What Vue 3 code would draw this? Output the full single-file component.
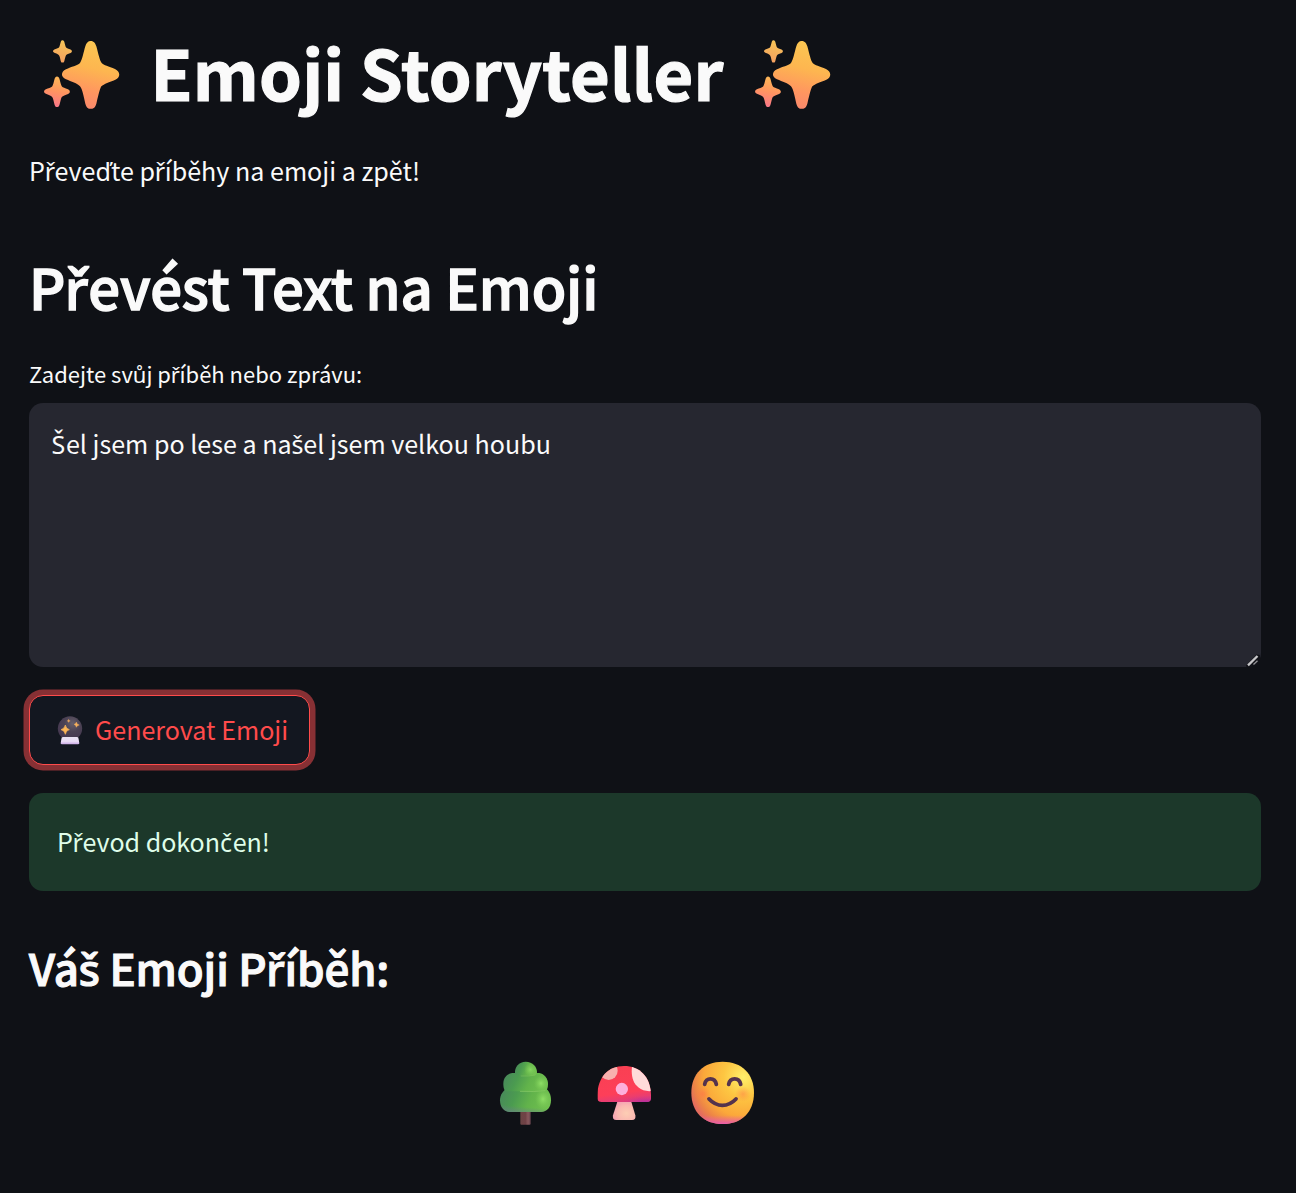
<script setup>
import { h, ref } from 'vue'

const story = ref('Šel jsem po lese a našel jsem velkou houbu')

// Letters with a caron that the main typeface lacks, and the class that sizes each.
const carons = { Š: 'cap-s', š: 'low-s', ř: 'low-r', č: 'low-c', ď: 'low-d' }
const split = (text) => text.split(/([Šščřď])/).filter(Boolean)

const Words = (props) =>
  split(props.text).map((part) => (carons[part] ? h('span', { class: ['caron', carons[part]] }, part) : part))
Words.props = ['text']
</script>

<template>
  <main class="page">
    <svg class="defs" width="0" height="0" aria-hidden="true">
      <defs>
        <linearGradient id="spark" x1="0.6" y1="0" x2="0.4" y2="1">
          <stop offset="0" stop-color="#fbc752" />
          <stop offset="0.4" stop-color="#fdb650" />
          <stop offset="0.75" stop-color="#ff9560" />
          <stop offset="1" stop-color="#f9886c" />
        </linearGradient>
        <linearGradient id="sparkLow" x1="0.6" y1="0" x2="0.4" y2="1">
          <stop offset="0" stop-color="#fdb956" />
          <stop offset="0.5" stop-color="#ff9461" />
          <stop offset="1" stop-color="#f9768a" />
        </linearGradient>
        <linearGradient id="sparkTop" x1="0.6" y1="0" x2="0.4" y2="1">
          <stop offset="0" stop-color="#f5c557" />
          <stop offset="1" stop-color="#f59f60" />
        </linearGradient>
        <path id="star" d="M182 48C192 48 196 55 199 64C206 90 209 106 215 114C221 121 236 124 255 132C272 140 272 157 256 164C238 172 222 176 214 184C208 194 203 222 199 236C195 250 188 251 182 251C176 251 170 250 166 236C161 215 157 192 150 184C142 175 124 170 108 163C92 156 92 141 108 133C124 125 142 122 150 114C157 105 161 80 166 64C169 54 174 48 182 48Z" />
      </defs>
    </svg>

    <h1 class="title">
      <svg class="sparkles left" viewBox="30 30 270 240">
        <use href="#star" fill="url(#spark)" />
        <use href="#star" fill="url(#sparkTop)" transform="translate(37.4 29.8) scale(.33)" />
        <use href="#star" fill="url(#sparkLow)" transform="translate(-1 133) scale(.45)" />
      </svg>
      <span>Emoji Storyteller</span>
      <svg class="sparkles right" viewBox="30 30 270 240">
        <use href="#star" fill="url(#spark)" />
        <use href="#star" fill="url(#sparkTop)" transform="translate(37.4 29.8) scale(.33)" />
        <use href="#star" fill="url(#sparkLow)" transform="translate(-1 133) scale(.45)" />
      </svg>
    </h1>
    <p class="intro"><Words text="Převeďte příběhy na emoji a zpět!" /></p>

    <h2 class="section"><Words text="Převést Text na Emoji" /></h2>
    <div id="story-label" class="label"><Words text="Zadejte svůj příběh nebo zprávu:" /></div>
    <div class="field">
      <div class="input" role="textbox" aria-multiline="true" aria-labelledby="story-label"><Words :text="story" /></div>
      <svg class="grip" viewBox="0 0 14 14">
        <path d="M0 12.500L10.500 1.500L14 2V7L6 14H0.500Z" fill="#111218" />
        <path d="M2 12.300L11.500 3" stroke="#c8c8ca" stroke-width="2.400" />
        <path d="M7.500 11.500L11.500 7.800" stroke="#96969a" stroke-width="1.200" />
      </svg>
    </div>

    <button class="generate" type="button">
      <svg class="ball" viewBox="123 104 84 90">
        <defs>
          <radialGradient id="orb" cx="0.6" cy="0.3" r="0.75">
            <stop offset="0" stop-color="#67606c" />
            <stop offset="0.45" stop-color="#4b4254" />
            <stop offset="1" stop-color="#443650" />
          </radialGradient>
          <linearGradient id="base" x1="0" y1="0" x2="0" y2="1">
            <stop offset="0" stop-color="#e9e3f2" />
            <stop offset="0.6" stop-color="#eadcf6" />
            <stop offset="1" stop-color="#c8a7e4" />
          </linearGradient>
        </defs>
        <circle cx="165" cy="144.500" r="36.500" fill="url(#orb)" />
        <path d="M144 170H186Q191 170 191 177L193 189Q193 192 189 192H141Q137 192 137 189L139 177Q139 170 144 170Z" fill="url(#base)" />
        <path d="M151 134Q153 145 163 148Q153 150 151 162Q149 150 138 148Q149 145 151 134Z" fill="#fdb657" stroke="#fdb657" stroke-width="2" />
        <path d="M184 125Q185 132 193 134Q186 135 184 141Q183 135 177 132Q183 131 184 125Z" fill="#f6b15d" stroke="#f6b15d" />
        <path d="M161 116Q162 120 167 122Q162 123 161 127Q160 123 155 122Q160 120 161 116Z" fill="#e9a45b" />
      </svg>
      <span>Generovat Emoji</span>
    </button>

    <div class="alert"><Words text="Převod dokončen!" /></div>

    <h3 class="result-title"><Words text="Váš Emoji Příběh:" /></h3>
    <div class="result">
      <svg width="57" height="67" viewBox="36 45 171 201">
        <defs>
          <linearGradient id="leaf" x1="0" y1="0.3" x2="1" y2="0.5">
            <stop offset="0" stop-color="#48895a" />
            <stop offset="0.3" stop-color="#4b9b50" />
            <stop offset="0.6" stop-color="#62b34b" />
            <stop offset="1" stop-color="#71c150" />
          </linearGradient>
          <radialGradient id="shine">
            <stop offset="0" stop-color="#8fdf66" />
            <stop offset="1" stop-color="#7ccb56" stop-opacity="0" />
          </radialGradient>
          <linearGradient id="trunk">
            <stop offset="0" stop-color="#6a4444" />
            <stop offset="0.5" stop-color="#704146" />
            <stop offset="0.75" stop-color="#87585c" />
            <stop offset="1" stop-color="#68434d" />
          </linearGradient>
          <linearGradient id="shade" x1="0.2" y1="0" x2="0" y2="1">
            <stop offset="0.7" stop-color="#687f84" stop-opacity="0" />
            <stop offset="1" stop-color="#687f84" stop-opacity="0.8" />
          </linearGradient>
        </defs>
        <path d="M106 190H137V236Q137 239 134 239H109Q106 239 106 236Z" fill="url(#trunk)" />
        <path d="M68 129H180C192 136 198 149 198 166C198 187 186 201 168 201H76C57 201 45 187 45 166C45 149 55 136 68 129Z" fill="url(#leaf)" />
        <path d="M68 129H180C192 136 198 149 198 166C198 187 186 201 168 201H76C57 201 45 187 45 166C45 149 55 136 68 129Z" fill="url(#shade)" />
        <ellipse cx="174" cy="162" rx="24" ry="30" fill="url(#shine)" />
        <path d="M82 84H163C178 87 189 100 189 116C189 126 187 137 179 139H62C56 134 55 125 55 116C55 98 67 86 82 84Z" fill="url(#leaf)" />
        <path d="M105 139Q150 141 181 137" fill="none" stroke="#87cb65" stroke-width="3" opacity="0.7" />
        <ellipse cx="168" cy="115" rx="21" ry="23" fill="url(#shine)" />
        <path d="M90 86C88 65 102 50 122 50C143 50 157 66 156 83C155 90 148 92 140 92H103C97 92 92 91 90 86Z" fill="url(#leaf)" />
        <path d="M107 93Q133 95 151 90" fill="none" stroke="#86c762" stroke-width="2" opacity="0.7" />
        <ellipse cx="136" cy="74" rx="19" ry="20" fill="url(#shine)" opacity="0.8" />
      </svg>
      <svg class="mushroom" width="58" height="67" viewBox="330 45 174 201">
        <defs>
          <linearGradient id="cap" x1="0.4" y1="0" x2="0.6" y2="1">
            <stop offset="0" stop-color="#f94052" />
            <stop offset="0.72" stop-color="#fd3f59" />
            <stop offset="1" stop-color="#da3c82" />
          </linearGradient>
          <radialGradient id="capShade" cx="0.9" cy="1.02" r="0.45" gradientTransform="translate(0 0.55) scale(1 0.45)">
            <stop offset="0" stop-color="#a82ca9" />
            <stop offset="1" stop-color="#d63584" stop-opacity="0" />
          </radialGradient>
          <radialGradient id="stem" cx="0.6" cy="0.65" r="0.65">
            <stop offset="0" stop-color="#fdceb4" />
            <stop offset="0.6" stop-color="#fbb9b1" />
            <stop offset="1" stop-color="#f5a1b4" />
          </radialGradient>
          <clipPath id="capClip"><path d="M417 63C464 63 497 95 498 151V160Q498 171 486 171H350Q337 171 337 160V151C338 96 370 63 417 63Z" /></clipPath>
        </defs>
        <path d="M398 167H438L451 211Q454 225 441 225H394Q381 225 384 211Z" fill="url(#stem)" />
        <g clip-path="url(#capClip)">
          <path d="M337 60H500V173H337Z" fill="url(#cap)" />
          <path d="M337 60H500V173H337Z" fill="url(#capShade)" />
          <ellipse cx="371" cy="77" rx="27" ry="28" fill="#f8b1ae" />
          <path d="M442 58C437 88 442 112 460 127Q477 141 501 138V55Z" fill="#ffdada" />
          <circle cx="410.500" cy="132" r="18.500" fill="#fdb0dc" />
        </g>
      </svg>
      <svg class="smile" width="67" height="67" viewBox="612 45 201 201">
        <defs>
          <radialGradient id="face" cx="0.83" cy="0.25" r="0.9">
            <stop offset="0" stop-color="#fff06b" />
            <stop offset="0.35" stop-color="#fdc642" />
            <stop offset="0.7" stop-color="#fba83a" />
            <stop offset="0.88" stop-color="#ed8546" />
            <stop offset="1" stop-color="#e36c5e" />
          </radialGradient>
          <linearGradient id="chin" x1="0" y1="0" x2="0" y2="1">
            <stop offset="0.86" stop-color="#ef65a0" stop-opacity="0" />
            <stop offset="1" stop-color="#e75cab" />
          </linearGradient>
          <radialGradient id="cheek">
            <stop offset="0" stop-color="#ff7847" stop-opacity="0.7" />
            <stop offset="1" stop-color="#ff8347" stop-opacity="0" />
          </radialGradient>
        </defs>
        <path d="M713 50C770 50 807 86 807 143C807 201 770 237 713 237C656 237 619 201 619 143C619 86 656 50 713 50Z" fill="url(#face)" />
        <path d="M713 50C770 50 807 86 807 143C807 201 770 237 713 237C656 237 619 201 619 143C619 86 656 50 713 50Z" fill="url(#chin)" />
        <circle cx="653" cy="147" r="24" fill="url(#cheek)" />
        <circle cx="774" cy="147" r="24" fill="url(#cheek)" opacity="0.7" />
        <path d="M659 118C662 96 690 96 694 118M731 118C735 96 763 96 767 118M672 162Q690 181 712 181Q735 181 753 162" fill="none" stroke="#55334d" stroke-width="11.500" stroke-linecap="round" />
      </svg>
    </div>
  </main>
</template>

<style>
body {
  margin: 0;
  background: #0f1116;
}

.caron {
  display: inline-block;
  height: 1em;
  line-height: 1em;
  font-family: "Noto Sans", sans-serif;
}

.cap-s {
  width: 0.596em;
  text-indent: 0.02em;
}

.low-s {
  width: 0.467em;
}

.low-r {
  width: 0.388em;
  text-indent: -0.01em;
}

.low-c {
  width: 0.508em;
}

.low-d {
  width: 0.62em;
}

h2 .low-r,
h3 .low-r {
  width: 0.41em;
}

h3 .low-s {
  width: 0.48em;
}
</style>

<style scoped>
.page {
  box-sizing: border-box;
  display: flex;
  flex-direction: column;
  height: 1193px;
  padding: 27px 35px 0 29px;
  overflow: hidden;
  background: #0f1116;
  color: #fafafa;
  font-family: "Noto Sans CJK SC", "Noto Sans CJK JP", "Noto Sans", sans-serif;
  font-size: 25.07px;
}

.defs {
  position: absolute;
}

h1,
h2,
h3,
p {
  margin: 0;
  white-space: nowrap;
}

.title {
  display: flex;
  height: 90px;
  line-height: 90px;
  font-size: 68.5px;
  font-weight: 700;
  letter-spacing: 0.2px;
  -webkit-text-stroke: 1.2px #fafafa;
}

.sparkles {
  flex: none;
  width: 90px;
  height: 80px;
  margin-top: 8px;
}

.sparkles.left {
  margin-left: 11px;
}

.title span {
  width: 590px;
  margin-left: 20.5px;
}

.sparkles.right {
  margin-left: 10.2px;
}

.intro {
  height: 46px;
  margin-top: 30px;
  line-height: 46px;
}

.section {
  height: 80px;
  margin-top: 53px;
  line-height: 79px;
  font-size: 56.2px;
  font-weight: 500;
  letter-spacing: -0.12px;
  -webkit-text-stroke: 1.4px #fafafa;
}

.label {
  height: 36px;
  margin-top: 29px;
  line-height: 37px;
  font-size: 21.97px;
}

.field {
  position: relative;
  height: 264px;
  margin-top: 12px;
}

.input {
  box-sizing: border-box;
  height: 100%;
  padding: 20px 22px;
  border-radius: 14px;
  background: #262730;
  line-height: 40px;
}

.grip {
  position: absolute;
  right: 1px;
  bottom: 0;
  width: 14px;
  height: 14px;
}

.generate {
  display: flex;
  align-items: center;
  box-sizing: border-box;
  width: 281px;
  height: 70px;
  margin-top: 28px;
  padding: 0 0 0 26px;
  border: 1px solid #ff4b4b;
  border-radius: 14px;
  background: #131720;
  box-shadow: 0 0 0 5.5px #873034;
  color: #ff4b4b;
  font: inherit;
  line-height: 40px;
  white-space: nowrap;
}

.generate span {
  padding-bottom: 2px;
}

.ball {
  width: 28px;
  height: 30px;
  margin-right: 11px;
}

.alert {
  box-sizing: border-box;
  height: 98px;
  margin-top: 28px;
  padding: 0 28px;
  border-radius: 14px;
  background: #1c382a;
  color: #dffde9;
  line-height: 96px;
  letter-spacing: -0.04px;
}

.result-title {
  height: 60px;
  margin-top: 46px;
  line-height: 60px;
  font-size: 43.8px;
  font-weight: 500;
  letter-spacing: -0.12px;
  -webkit-text-stroke: 1.1px #fafafa;
}

.result {
  display: flex;
  justify-content: center;
  margin-top: 63px;
  padding-right: 37px;
}

.mushroom {
  margin-left: 41px;
}

.smile {
  margin-left: 36px;
}
</style>
